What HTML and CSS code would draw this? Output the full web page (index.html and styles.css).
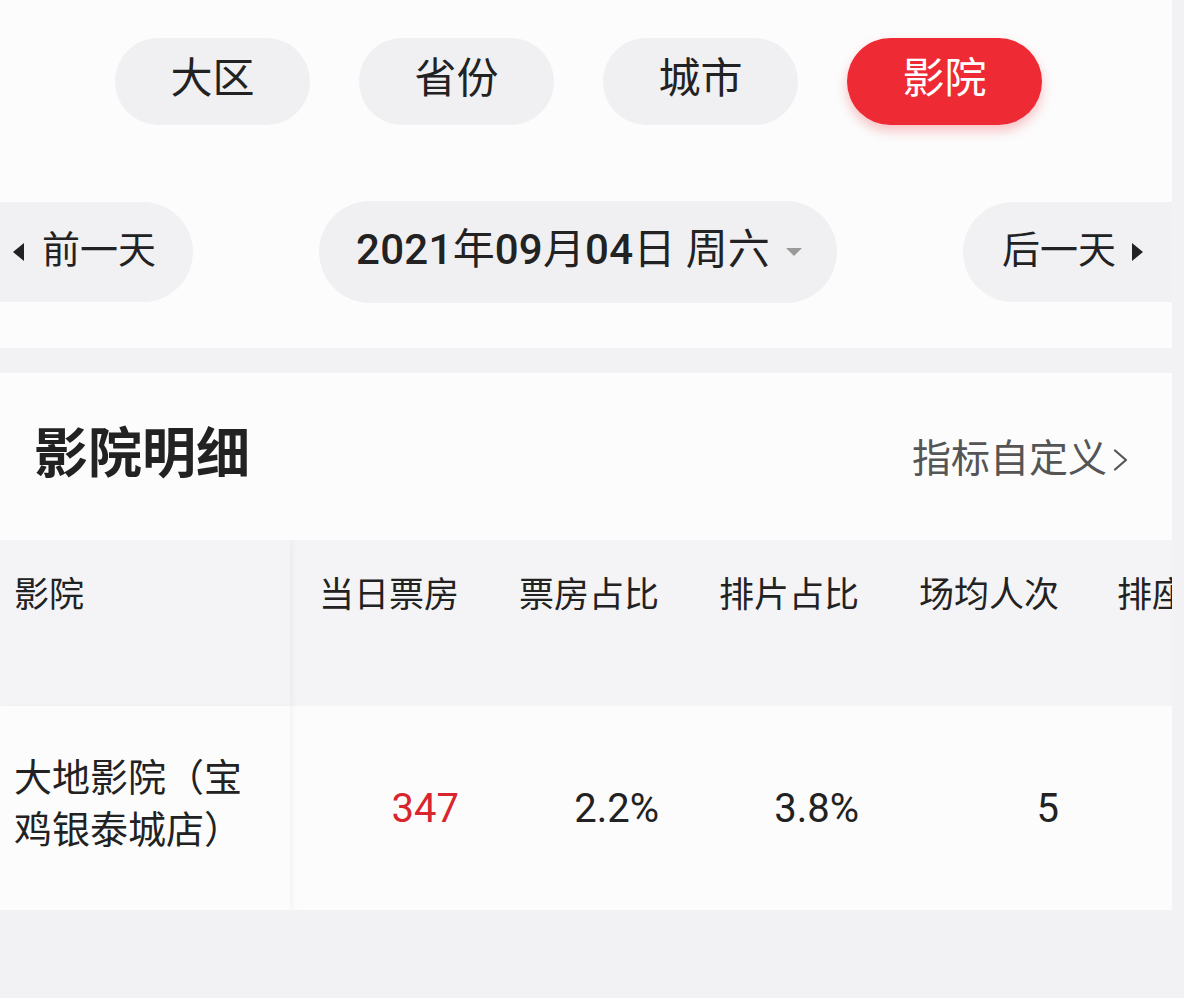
FILE: index.html
```html
<!DOCTYPE html>
<html lang="zh-CN">
<head>
<meta charset="utf-8">
<title>影院明细</title>
<link rel="stylesheet" href="styles.css">
</head>
<body>
<div class="page">
  <section class="card card-top">
    <div class="tabs">
      <div class="tab">大区</div>
      <div class="tab">省份</div>
      <div class="tab">城市</div>
      <div class="tab tab-active">影院</div>
    </div>
    <div class="date-row">
      <div class="day-btn day-prev">
        <svg class="tri" width="11" height="18" viewBox="0 0 11 18"><path d="M11 0 L0 9 L11 18 Z" fill="#222"/></svg>
        <span>前一天</span>
      </div>
      <div class="date-pill">
        <span class="date-text"><span class="dg">2021</span>年<span class="dg">09</span>月<span class="dg">04</span>日 周六</span>
        <svg class="caret" width="16" height="8" viewBox="0 0 16 8"><path d="M0 0 L16 0 L8 8 Z" fill="#9a9a9a"/></svg>
      </div>
      <div class="day-btn day-next">
        <span>后一天</span>
        <svg class="tri" width="11" height="18" viewBox="0 0 11 18"><path d="M0 0 L11 9 L0 18 Z" fill="#222"/></svg>
      </div>
    </div>
  </section>

  <section class="card card-detail">
    <div class="detail-head">
      <h2 class="detail-title">影院明细</h2>
      <div class="custom-link">
        <span>指标自定义</span>
        <svg class="chev" width="15" height="22" viewBox="0 0 15 22"><path d="M2 1.5 L13 11 L2 20.5" fill="none" stroke="#555" stroke-width="2.2" stroke-linecap="round" stroke-linejoin="round"/></svg>
      </div>
    </div>
    <div class="table">
      <div class="trow thead">
        <div class="cell cell-name">影院</div>
        <div class="cell cell-num">当日票房</div>
        <div class="cell cell-num">票房占比</div>
        <div class="cell cell-num">排片占比</div>
        <div class="cell cell-num">场均人次</div>
        <div class="cell cell-num cell-clip"><span class="clip-text">排座占比</span></div>
      </div>
      <div class="trow tbody">
        <div class="cell cell-name">大地影院（宝鸡银泰城店）</div>
        <div class="cell cell-num red">347</div>
        <div class="cell cell-num">2.2%</div>
        <div class="cell cell-num">3.8%</div>
        <div class="cell cell-num">5</div>
        <div class="cell cell-num cell-clip"></div>
      </div>
    </div>
  </section>
</div>
</body>
</html>
```

FILE: styles.css
```css
html, body {
  margin: 0;
  padding: 0;
}
body {
  background: #f2f2f4;
  font-family: Roboto, "Noto Sans CJK SC", sans-serif;
  color: #222;
  width: 1184px;
  height: 998px;
  overflow: hidden;
}
.page {
  width: 1172px;
  overflow: hidden;
}
.card {
  background: #fcfcfc;
  overflow: hidden;
}
.card-top {
  height: 348px;
}
.tabs {
  display: flex;
  gap: 49px;
  padding: 38px 0 0 115px;
}
.tab {
  width: 195px;
  height: 87px;
  border-radius: 44px;
  background: #f0f0f2;
  display: flex;
  align-items: center;
  justify-content: center;
  font-size: 42px;
  line-height: 1;
  padding-bottom: 5px;
  box-sizing: border-box;
  color: #222;
}
.tab-active {
  background: #ee2a35;
  color: #fff;
  box-shadow: 0 6px 12px rgba(238, 42, 53, 0.28);
}
.date-row {
  display: flex;
  align-items: center;
  gap: 126px;
  margin-top: 76px;
}
.day-btn {
  height: 100px;
  background: #f1f1f3;
  display: flex;
  align-items: center;
  font-size: 38px;
  line-height: 1;
  color: #222;
  box-sizing: border-box;
  flex: none;
}
.day-btn span {
  padding-bottom: 4px;
}
.day-prev {
  width: 193px;
  border-radius: 0 50px 50px 0;
  padding-left: 13px;
  gap: 18px;
}
.day-next {
  width: 209px;
  border-radius: 50px 0 0 50px;
  padding-left: 39px;
  gap: 16px;
}
.date-pill {
  width: 518px;
  height: 102px;
  border-radius: 51px;
  background: #f0f0f2;
  display: flex;
  align-items: center;
  box-sizing: border-box;
  padding-left: 37px;
  gap: 16px;
  flex: none;
}
.date-text {
  font-size: 42px;
  line-height: 1;
  padding-bottom: 4px;
  color: #222;
  white-space: nowrap;
}
.dg {
  font-weight: 500;
  letter-spacing: 0.3px;
}
.card-detail {
  margin-top: 25px;
}
.detail-head {
  height: 167px;
  display: flex;
  align-items: center;
  justify-content: space-between;
  padding: 0 44px 0 34px;
  box-sizing: border-box;
}
.detail-title {
  margin: 0;
  font-size: 54px;
  line-height: 1;
  padding-bottom: 3px;
  font-weight: 700;
  color: #222;
}
.custom-link {
  display: flex;
  align-items: center;
  gap: 6px;
  font-size: 39px;
  line-height: 1;
  color: #555;
  padding-top: 6px;
}
.table {
  width: 1172px;
  overflow: hidden;
}
.trow {
  display: flex;
  width: 1172px;
}
.thead {
  height: 166px;
  background: #f4f4f6;
  font-size: 35px;
  align-items: flex-start;
}
.thead .cell {
  padding-top: 30px;
}
.tbody {
  height: 204px;
  background: #fcfcfc;
  align-items: center;
}
.cell {
  box-sizing: border-box;
  line-height: 52px;
}
.cell-name {
  width: 290px;
  flex: none;
  padding: 0 30px 0 14px;
  box-shadow: 3px 0 6px rgba(0, 0, 0, 0.035);
  position: relative;
  z-index: 1;
  height: 100%;
  display: flex;
}
.thead .cell-name {
  background: #f4f4f6;
  align-items: flex-start;
}
.tbody .cell-name {
  background: #fcfcfc;
  font-size: 38px;
  align-items: center;
  padding-bottom: 8px;
}
.cell-num {
  width: 200px;
  flex: none;
  text-align: right;
  padding-right: 31px;
}
.tbody .cell-num {
  font-size: 40px;
  margin-top: 2px;
}
.cell-clip {
  width: 82px;
  padding-right: 0;
  padding-left: 27px;
  text-align: left;
  overflow: hidden;
  white-space: nowrap;
}
.clip-text {
  display: inline-block;
  width: 55px;
  overflow: hidden;
  white-space: nowrap;
  vertical-align: top;
}
.red {
  color: #d9262e;
}
```
